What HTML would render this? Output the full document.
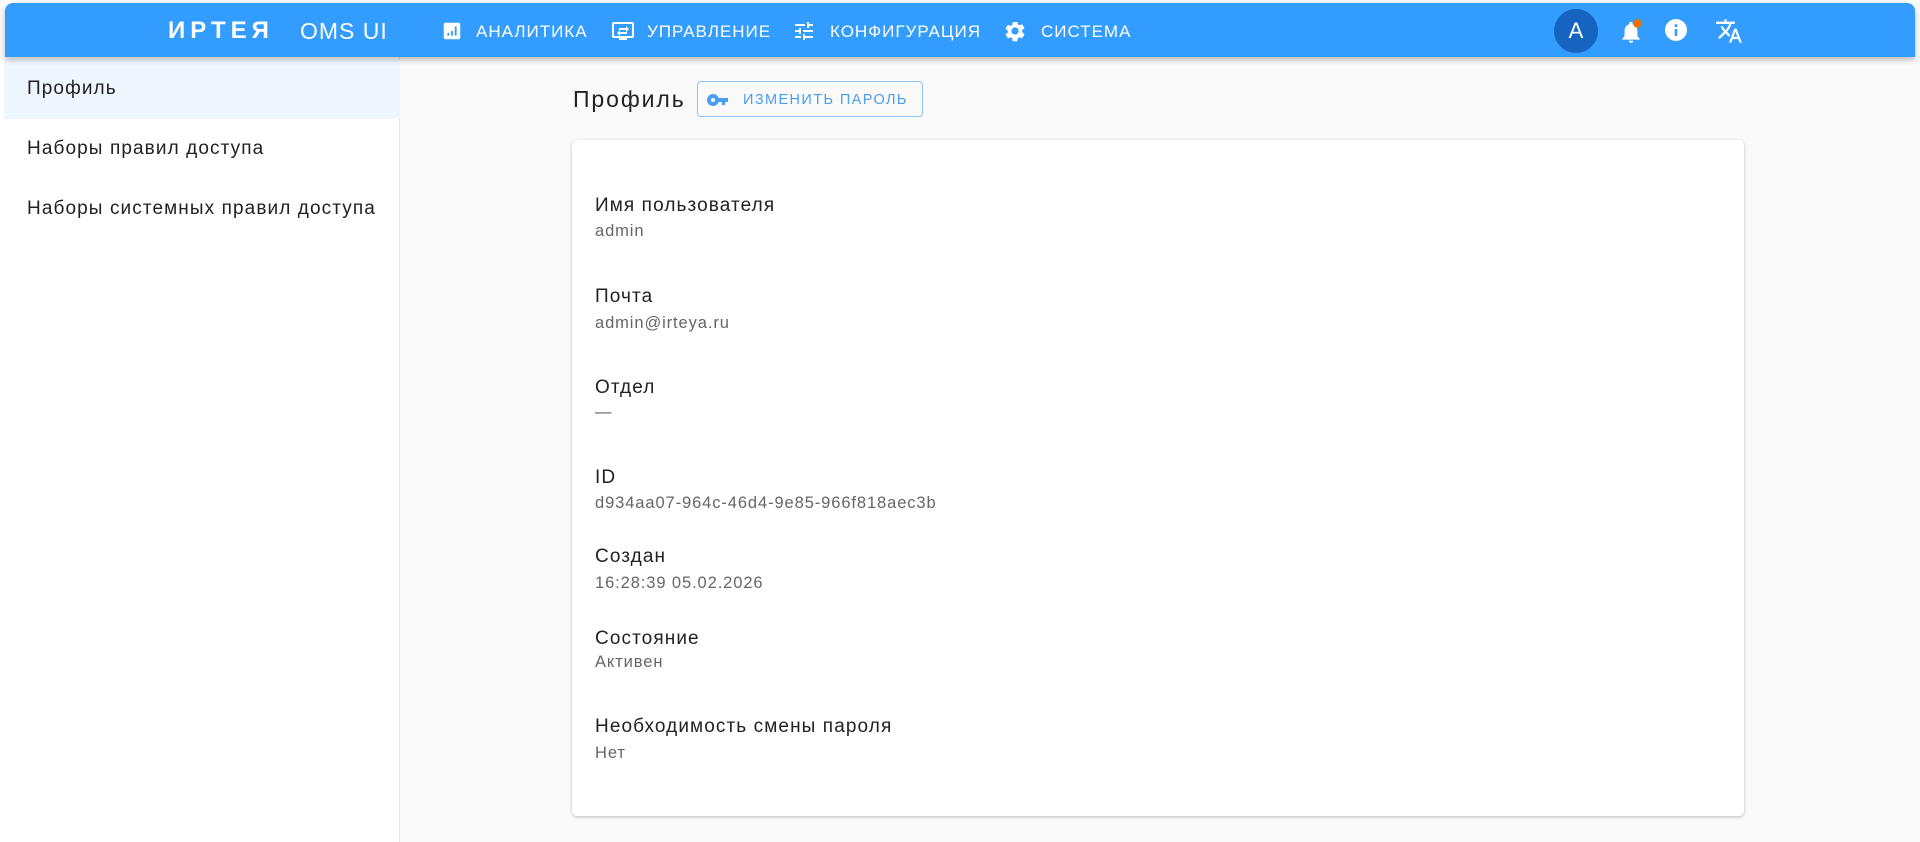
<!DOCTYPE html>
<html><head><meta charset="utf-8"><style>
*{margin:0;padding:0;box-sizing:border-box}
body{width:1920px;height:842px;background:#fafafa;font-family:"Liberation Sans",sans-serif;position:relative;overflow:hidden;color:#222}
.hdr{position:absolute;left:5px;top:3px;width:1910px;height:54px;background:#339cff;border-radius:8px 8px 0 0;box-shadow:0 3px 6px rgba(0,0,0,.25);color:#fff;z-index:2}
.a{position:absolute;white-space:nowrap}
.nav{font-size:17px;top:19px;letter-spacing:1px}
.side{position:absolute;left:0;top:57px;width:400px;height:785px;background:#fff;border-right:1px solid #e4e4e4}
.side .a{letter-spacing:1.1px}
.card{position:absolute;left:572px;top:140px;width:1172px;height:676px;background:#fff;border-radius:5px;box-shadow:0 1px 3px rgba(0,0,0,.25)}
.lb{position:absolute;left:23px;font-size:19px;color:#222;letter-spacing:1.1px}
.vl{position:absolute;left:23px;font-size:16.5px;color:#666;letter-spacing:0.9px}
</style></head><body>
<div class="hdr">
 <div class="a" style="left:163px;top:14px;font-size:24px;font-weight:bold;letter-spacing:5px">ИРТЕЯ</div>
 <div class="a" style="left:295px;top:15px;font-size:23px;letter-spacing:1px">OMS UI</div>
 <svg class="a" style="left:436px;top:17px" width="22" height="22" viewBox="0 0 24 24"><path fill="#fff" d="M19 3H5a2 2 0 0 0-2 2v14a2 2 0 0 0 2 2h14a2 2 0 0 0 2-2V5a2 2 0 0 0-2-2zM9 17H7v-3h2zm4 0h-2v-5h2zm4 0h-2V7h2z"/></svg>
 <div class="a nav" style="left:471px">АНАЛИТИКА</div>
 <svg class="a" style="left:606px;top:16px" width="24" height="24" viewBox="0 0 24 24"><path fill="#fff" d="M21 3H3a2 2 0 0 0-2 2v12a2 2 0 0 0 2 2h5v2h8v-2h5a2 2 0 0 0 2-2V5a2 2 0 0 0-2-2zm0 14H3V5h18zM8 9h7V7l3 3-3 3v-2H8zm8 4H9v-2l-3 3 3 3v-2h7z"/></svg>
 <div class="a nav" style="left:642px">УПРАВЛЕНИЕ</div>
 <svg class="a" style="left:787px;top:16px" width="24" height="24" viewBox="0 0 24 24"><path fill="#fff" d="M3 17v2h6v-2zM3 5v2h10V5zm10 16v-2h8v-2h-8v-2h-2v6zM7 9v2H3v2h4v2h2V9zm14 4v-2H11v2zm-6-4h2V7h4V5h-4V3h-2z"/></svg>
 <div class="a nav" style="left:825px">КОНФИГУРАЦИЯ</div>
 <svg class="a" style="left:998px;top:16px" width="24" height="24" viewBox="0 0 24 24"><path fill="#fff" d="M19.14 12.94a7.1 7.1 0 0 0 0-1.88l2.03-1.58a.5.5 0 0 0 .12-.61l-1.920-3.32a.5.5 0 0 0-.59-.22l-2.39.96a7 7 0 0 0-1.62-.94l-.36-2.54A.48.48 0 0 0 13.93 3h-3.84a.48.48 0 0 0-.48.41l-.36 2.54a7.3 7.3 0 0 0-1.62.94l-2.39-.96a.49.49 0 0 0-.59.22L2.73 9.47a.49.49 0 0 0 .12.61l2.03 1.58a7 7 0 0 0 0 1.88l-2.03 1.58a.5.5 0 0 0-.12.61l1.92 3.32c.12.22.37.29.59.22l2.39-.96c.5.38 1.03.7 1.62.94l.36 2.54c.05.24.24.41.48.41h3.84c.24 0 .44-.17.47-.41l.36-2.54a7 7 0 0 0 1.62-.94l2.39.96c.22.08.47 0 .59-.22l1.92-3.32a.5.5 0 0 0-.12-.61zM12 15.6A3.6 3.6 0 1 1 12 8.4a3.6 3.6 0 0 1 0 7.2z"/></svg>
 <div class="a nav" style="left:1036px">СИСТЕМА</div>
 <div class="a" style="left:1549px;top:6px;width:44px;height:44px;border-radius:50%;background:#1565c0;text-align:center;line-height:44px;font-size:22px">A</div>
 <svg class="a" style="left:1613px;top:14px" width="26" height="28" viewBox="0 0 24 26"><path fill="#fff" d="M12 24a2 2 0 0 0 2-2h-4a2 2 0 0 0 2 2zm6-6v-5c0-3.07-1.64-5.64-4.5-6.32V6a1.5 1.5 0 0 0-3 0v.68C7.63 7.36 6 9.920 6 13v5l-2 2v1h16v-1z"/><circle cx="18" cy="6" r="4" fill="#ef6c00"/></svg>
 <svg class="a" style="left:1659px;top:15px" width="24" height="24" viewBox="0 0 24 24"><path fill="#fff" d="M12 1a11 11 0 1 0 0 22 11 11 0 0 0 0-22zm1.3 17h-2.6v-7h2.6zm0-9h-2.6V6.3h2.6z"/></svg>
 <svg class="a" style="left:1710px;top:14px" width="28" height="28" viewBox="0 0 24 24"><path fill="#fff" d="M12.87 15.07l-2.54-2.51.03-.03A17.5 17.5 0 0 0 14.07 6H17V4h-7V2H8v2H1v2h11.17C11.5 7.92 10.44 9.75 9 11.35 8.07 10.32 7.3 9.19 6.69 8h-2c.73 1.63 1.73 3.170 2.98 4.56l-5.09 5.02L4 19l5-5 3.11 3.11zM18.5 10h-2L12 22h2l1.12-3h4.75L21 22h2zm-2.62 7l1.62-4.33L19.12 17z"/></svg>
</div>
<div class="side">
 <div style="position:absolute;left:4px;top:2px;width:396px;height:60px;background:#eef6ff"></div>
 <div class="a" style="left:27px;top:21px;font-size:19px">Профиль</div>
 <div class="a" style="left:27px;top:81px;font-size:19px">Наборы правил доступа</div>
 <div class="a" style="left:27px;top:141px;font-size:19px">Наборы системных правил доступа</div>
</div>
<div class="a" style="left:573px;top:86px;font-size:23px;letter-spacing:1.9px">Профиль</div>
<div class="a" style="left:697px;top:81px;width:226px;height:36px;border:1px solid #90c4f5;border-radius:4px">
 <svg class="a" style="left:9px;top:9px" width="24" height="18" viewBox="0 0 24 18"><path fill="#4a9ef0" d="M6 3a6 6 0 1 0 5.65 8H15v3h3v-3h3V7h-9.35A6 6 0 0 0 6 3zm0 8a2 2 0 1 1 0-4 2 2 0 0 1 0 4z"/></svg>
 <div class="a" style="left:45px;top:10px;font-size:14.5px;color:#4a9ef0;letter-spacing:1.4px">ИЗМЕНИТЬ ПАРОЛЬ</div>
</div>
<div class="card">
 <div class="lb" style="top:55px">Имя пользователя</div><div class="vl" style="top:82px">admin</div>
 <div class="lb" style="top:146px">Почта</div><div class="vl" style="top:174px">admin@irteya.ru</div>
 <div class="lb" style="top:237px">Отдел</div><div class="vl" style="top:263px">—</div>
 <div class="lb" style="top:327px">ID</div><div class="vl" style="top:354px">d934aa07-964c-46d4-9e85-966f818aec3b</div>
 <div class="lb" style="top:406px">Создан</div><div class="vl" style="top:434px">16:28:39 05.02.2026</div>
 <div class="lb" style="top:488px">Состояние</div><div class="vl" style="top:513px">Активен</div>
 <div class="lb" style="top:576px">Необходимость смены пароля</div><div class="vl" style="top:604px">Нет</div>
</div>
</body></html>
